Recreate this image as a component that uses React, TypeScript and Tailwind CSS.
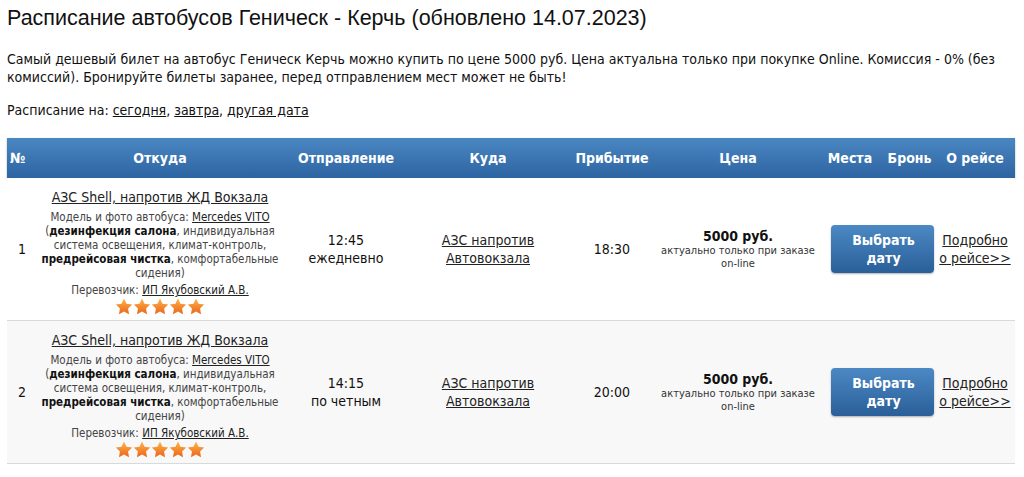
import React from "react";

const body = { fontFamily: '"DejaVu Sans Condensed", "DejaVu Sans", Verdana, sans-serif', fontStretch: "condensed" as const };

function Star({ id }: { id: string }) {
  return (
    <svg width="18" height="17" viewBox="0 0 24 23">
      <defs>
        <linearGradient id={id} x1="0" y1="0" x2="0" y2="1">
          <stop offset="0" stopColor="#ffb347" />
          <stop offset="1" stopColor="#e9661c" />
        </linearGradient>
      </defs>
      <path
        d="M12 0.8l3.4 7 7.7 1.1-5.6 5.4 1.3 7.6L12 18.3l-6.8 3.6 1.3-7.6L0.9 8.9l7.7-1.1z"
        fill={`url(#${id})`}
      />
    </svg>
  );
}

function Row({ n, dep, days, arr, alt }: { n: number; dep: string; days: string; arr: string; alt?: boolean }) {
  return (
    <tr className={`border-b border-[#d9d9d9] ${alt ? "bg-[#f8f8f8]" : "bg-white"}`}>
      <td className="pl-[11px] text-[14px] text-[#111] align-middle">{n}</td>
      <td className="text-center align-middle pt-[10px] pb-[5px]">
        <div className="text-[14px] leading-[18px] underline text-[#222]">АЗС Shell, напротив ЖД Вокзала</div>
        <div className="text-[11.5px] leading-[14px] text-[#444] mt-[4px] -mx-[2px]">
          Модель и фото автобуса: <span className="underline text-[#222]">Mercedes VITO</span>
          <br />(<b className="text-[#111]">дезинфекция салона</b>, индивидуальная система освещения, климат-контроль,{" "}
          <b className="text-[#111]">предрейсовая чистка</b>, комфортабельные сидения)
        </div>
        <div className="text-[11.5px] leading-[14px] text-[#444] mt-[3px]">
          Перевозчик: <span className="underline text-[#222]">ИП Якубовский А.В.</span>
        </div>
        <div className="flex justify-center mt-[1px]">
          {[0, 1, 2, 3, 4].map((i) => (
            <Star key={i} id={`s${n}${i}`} />
          ))}
        </div>
      </td>
      <td className="text-center text-[14px] leading-[18px] text-[#111] align-middle">
        {dep}
        <br />
        {days}
      </td>
      <td className="text-center text-[14px] leading-[18px] text-[#222] underline align-middle">
        АЗС напротив
        <br />
        Автовокзала
      </td>
      <td className="text-center text-[14px] text-[#111] align-middle">{arr}</td>
      <td className="text-center align-middle">
        <div className="text-[14px] leading-[16px] font-bold text-[#111]">5000 руб.</div>
        <div className="text-[11px] leading-[13px] text-[#333]">
          актуально только при заказе
          <br />
          on-line
        </div>
      </td>
      <td colSpan={2} className="align-middle pl-[14px]">
        <div className="flex justify-center">
          <div className="w-[103px] h-[48px] rounded-[4px] bg-gradient-to-b from-[#4c89c4] to-[#2a5f99] shadow-[0_1px_2px_rgba(0,0,0,0.3)] flex flex-col items-center justify-center text-white font-bold text-[14px] leading-[18px] pl-[2px]">
            <span>Выбрать</span>
            <span>дату</span>
          </div>
        </div>
      </td>
      <td className="text-center text-[14px] leading-[18px] text-[#222] underline align-middle whitespace-nowrap">
        Подробно
        <br />о рейсе&gt;&gt;
      </td>
    </tr>
  );
}

export default function App() {
  return (
    <div className="bg-white w-[1024px] h-[477px] overflow-hidden px-[7px] pt-[5px]" style={body}>
      <h1
        className="text-[21.5px] leading-[26px] text-[#111] font-normal"
        style={{ fontFamily: '"Liberation Sans", Arial, sans-serif', fontStretch: "normal" }}
      >
        Расписание автобусов Геническ - Керчь (обновлено 14.07.2023)
      </h1>
      <p className="mt-[19px] text-[14px] leading-[18px] text-[#111] pr-[20px]">
        Самый дешевый билет на автобус Геническ Керчь можно купить по цене 5000 руб. Цена актуальна только при покупке Online. Комиссия - 0% (без комиссий). Бронируйте билеты заранее, перед отправлением мест может не быть!
      </p>
      <p className="mt-[15px] text-[14px] leading-[18px] text-[#111]">
        Расписание на: <span className="underline">сегодня</span>, <span className="underline">завтра</span>,{" "}
        <span className="underline">другая дата</span>
      </p>
      <table className="mt-[19px] w-[1008px] table-fixed border-collapse">
        <colgroup>
          <col className="w-[33px]" />
          <col className="w-[240px]" />
          <col className="w-[132px]" />
          <col className="w-[152px]" />
          <col className="w-[96px]" />
          <col className="w-[156px]" />
          <col className="w-[68px]" />
          <col className="w-[51px]" />
          <col className="w-[80px]" />
        </colgroup>
        <thead>
          <tr className="h-[40px] bg-gradient-to-b from-[#4a87c2] to-[#2d64a2] text-white text-[14px] font-bold shadow-[0_1px_2px_rgba(0,0,0,0.3)]">
            <th className="text-left pl-[3px]">№</th>
            <th>Откуда</th>
            <th>Отправление</th>
            <th>Куда</th>
            <th>Прибытие</th>
            <th>Цена</th>
            <th>Места</th>
            <th>Бронь</th>
            <th>О рейсе</th>
          </tr>
        </thead>
        <tbody>
          <Row n={1} dep="12:45" days="ежедневно" arr="18:30" />
          <Row n={2} dep="14:15" days="по четным" arr="20:00" alt />
        </tbody>
      </table>
    </div>
  );
}
